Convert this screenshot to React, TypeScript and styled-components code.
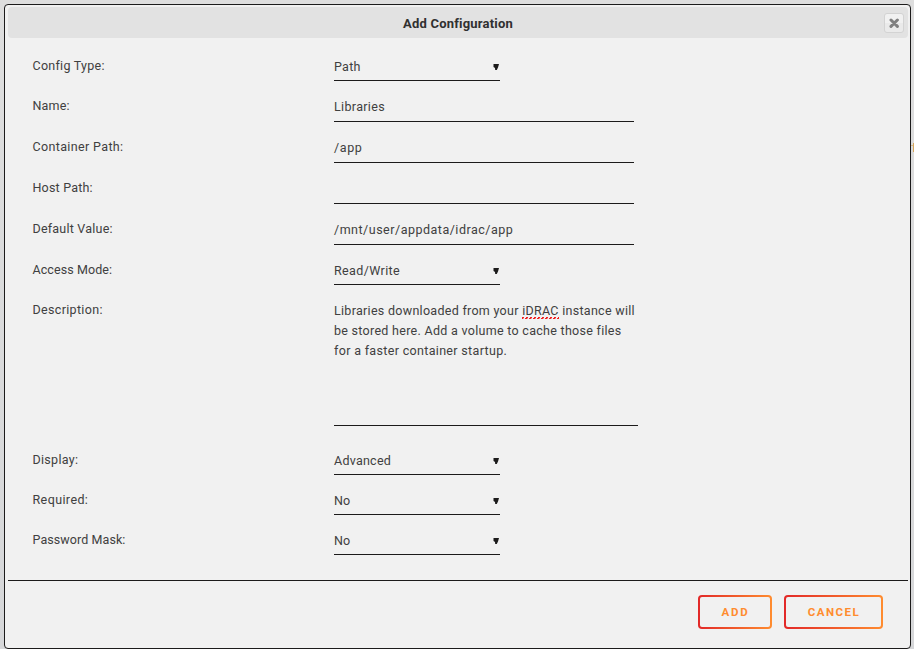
import React from "react";
import styled, { createGlobalStyle } from "styled-components";

const GlobalStyle = createGlobalStyle`
  *, *::before, *::after { box-sizing: border-box; }
  html, body { margin: 0; padding: 0; }
  body {
    height: 649px;
    overflow: hidden;
    background: linear-gradient(#dedede, #d6d7d9);
    color: #404040;
    font-family: Roboto, "Noto Sans", sans-serif;
    font-size: 12.5px;
    line-height: 20px;
  }
`;

const Page = styled.div`
  position: relative;
  height: 649px;
  padding: 4px 3px 0 4px;
`;

const PageMark = styled.div`
  position: absolute;
  right: 0;
  top: 143px;
  width: 3px;
  height: 9px;
  background:
    linear-gradient(#d6a65c, #d6a65c) 2px 0 / 1px 9px no-repeat,
    linear-gradient(#d9b98a, #d9b98a) 0 2px / 3px 1px no-repeat;
`;

const Dialog = styled.section`
  position: relative;
  display: flex;
  flex-direction: column;
  height: 645px;
  padding: 2px 2px 2px 3px;
  border: 1px solid #1c1b1b;
  border-radius: 4px;
  background: #f1f1f1;
`;

const TitleBar = styled.header`
  display: flex;
  align-items: center;
  height: 31px;
  padding: 0 4px 0 24px;
  border-radius: 4px;
  background: #e2e2e2;
`;

const Title = styled.h1`
  flex: 1;
  margin: 0;
  padding-top: 1px;
  text-align: center;
  color: #303030;
  font-size: 13px;
  line-height: 21px;
  font-weight: 700;
  letter-spacing: 0.2px;
`;

const CloseButton = styled.button`
  display: grid;
  place-items: center;
  width: 20px;
  height: 20px;
  padding: 0;
  border: 1px solid #d3d3d3;
  border-radius: 3px;
  background: linear-gradient(#f1f1f1 50%, #eaeaea 50%);
`;

const Form = styled.div`
  flex: 1;
  padding-left: 24px;
`;

const Row = styled.div<{ $height: number }>`
  display: grid;
  grid-template-columns: 302px 304px;
  align-items: end;
  height: ${(p) => p.$height}px;
`;

const Label = styled.label<{ $lift: number; $spacing: number }>`
  padding-bottom: ${(p) => p.$lift}px;
  padding-left: 0.5px;
  letter-spacing: ${(p) => p.$spacing}px;
`;

const Field = styled.div<{ $spacing: number }>`
  width: 300px;
  height: 25px;
  border-bottom: 1px solid #1c1b1b;
  letter-spacing: ${(p) => p.$spacing}px;
  white-space: pre;
`;

const SelectField = styled(Field)`
  display: flex;
  align-items: flex-start;
  justify-content: space-between;
  width: 166px;
  height: 24px;
`;

const Arrow = styled.svg`
  margin-top: 7px;
`;

const Description = styled(Field)`
  width: 304px;
  height: 125px;
`;

const Line = styled.div<{ $spacing: number }>`
  letter-spacing: ${(p) => p.$spacing}px;
`;

const Misspelled = styled.span`
  padding-bottom: 1px;
  background:
    linear-gradient(90deg, #f02020 50%, transparent 50%) 0 calc(100% - 1px) / 4px 1px repeat-x,
    linear-gradient(90deg, #f0202066 25%, transparent 25% 50%, #f02020 50%) 1px 100% / 4px 1px repeat-x;
`;

const Footer = styled.footer`
  display: flex;
  justify-content: flex-end;
  gap: 12px;
  height: 66px;
  padding: 14px 25px 0 0;
  border-top: 1px solid #1c1b1b;
`;

const ActionButton = styled.button<{ $width: number; $spacing: number }>`
  width: ${(p) => p.$width}px;
  height: 34px;
  padding: 0 0 0 1px;
  border: 2px solid transparent;
  border-radius: 4px;
  background:
    linear-gradient(#f1f1f1, #f1f1f1) padding-box,
    linear-gradient(90deg, #e22828, #ff8c2f) border-box;
  color: #ff8c2f;
  font: 700 11.5px/18px Roboto, sans-serif;
  letter-spacing: ${(p) => p.$spacing}px;
`;

type RowData = {
  label: string;
  value: string;
  height: number;
  select?: boolean;
  labelSpacing: number;
  spacing: number;
};

const topRows: RowData[] = [
  { label: "Config Type:", value: "Path", height: 43, select: true, labelSpacing: 0.27, spacing: 0.3 },
  { label: "Name:", value: "Libraries", height: 41, labelSpacing: 0.15, spacing: 0.34 },
  { label: "Container Path:", value: "/app", height: 41, labelSpacing: 0.36, spacing: 0.6 },
  { label: "Host Path:", value: "", height: 41, labelSpacing: 0.2, spacing: 0 },
  { label: "Default Value:", value: "/mnt/user/appdata/idrac/app", height: 41, labelSpacing: 0.22, spacing: 0.5 },
  { label: "Access Mode:", value: "Read/Write", height: 40, select: true, labelSpacing: 0.08, spacing: 0.38 },
];

const bottomRows: RowData[] = [
  { label: "Display:", value: "Advanced", height: 49, select: true, labelSpacing: 0.3, spacing: 0.25 },
  { label: "Required:", value: "No", height: 40, select: true, labelSpacing: 0.4, spacing: 0.2 },
  { label: "Password Mask:", value: "No", height: 40, select: true, labelSpacing: 0.08, spacing: 0.2 },
];

function SettingRow({ row }: { row: RowData }) {
  const { label, value, height, select, labelSpacing, spacing } = row;
  return (
    <Row $height={height}>
      <Label $lift={select ? 5 : 6} $spacing={labelSpacing}>{label}</Label>
      {select ? (
        <SelectField $spacing={spacing}>
          {value}
          <Arrow width="7" height="6" viewBox="0 0 7 6">
            <path d="M0.5 0H6L5 3.5L3.8 6H2.2L2 4L0.5 3Z" fill="#1c1b1b" />
          </Arrow>
        </SelectField>
      ) : (
        <Field $spacing={spacing}>{value}</Field>
      )}
    </Row>
  );
}

export default function App() {
  return (
    <>
      <GlobalStyle />
      <Page>
        <PageMark />
        <Dialog>
          <TitleBar>
            <Title>Add Configuration</Title>
            <CloseButton aria-label="Close">
              <svg width="10" height="10" viewBox="0 0 10 10">
                <path d="M2 2L8.4 8.4M8.4 2L2 8.4" stroke="#808080" strokeWidth="3" strokeLinecap="round" />
              </svg>
            </CloseButton>
          </TitleBar>
          <Form>
            {topRows.map((row) => <SettingRow key={row.label} row={row} />)}
            <Row $height={141}>
              <Label $lift={106} $spacing={0.33}>Description:</Label>
              <Description $spacing={0.3}>
                <Line $spacing={0.29}>Libraries downloaded from your <Misspelled>iDRAC</Misspelled> instance will</Line>
                <Line $spacing={0.29}>be stored here. Add a volume to cache those files</Line>
                <Line $spacing={0.33}>for a faster container startup.</Line>
              </Description>
            </Row>
            {bottomRows.map((row) => <SettingRow key={row.label} row={row} />)}
          </Form>
          <Footer>
            <ActionButton $width={74} $spacing={1.7}>ADD</ActionButton>
            <ActionButton $width={99} $spacing={1.5}>CANCEL</ActionButton>
          </Footer>
        </Dialog>
      </Page>
    </>
  );
}
